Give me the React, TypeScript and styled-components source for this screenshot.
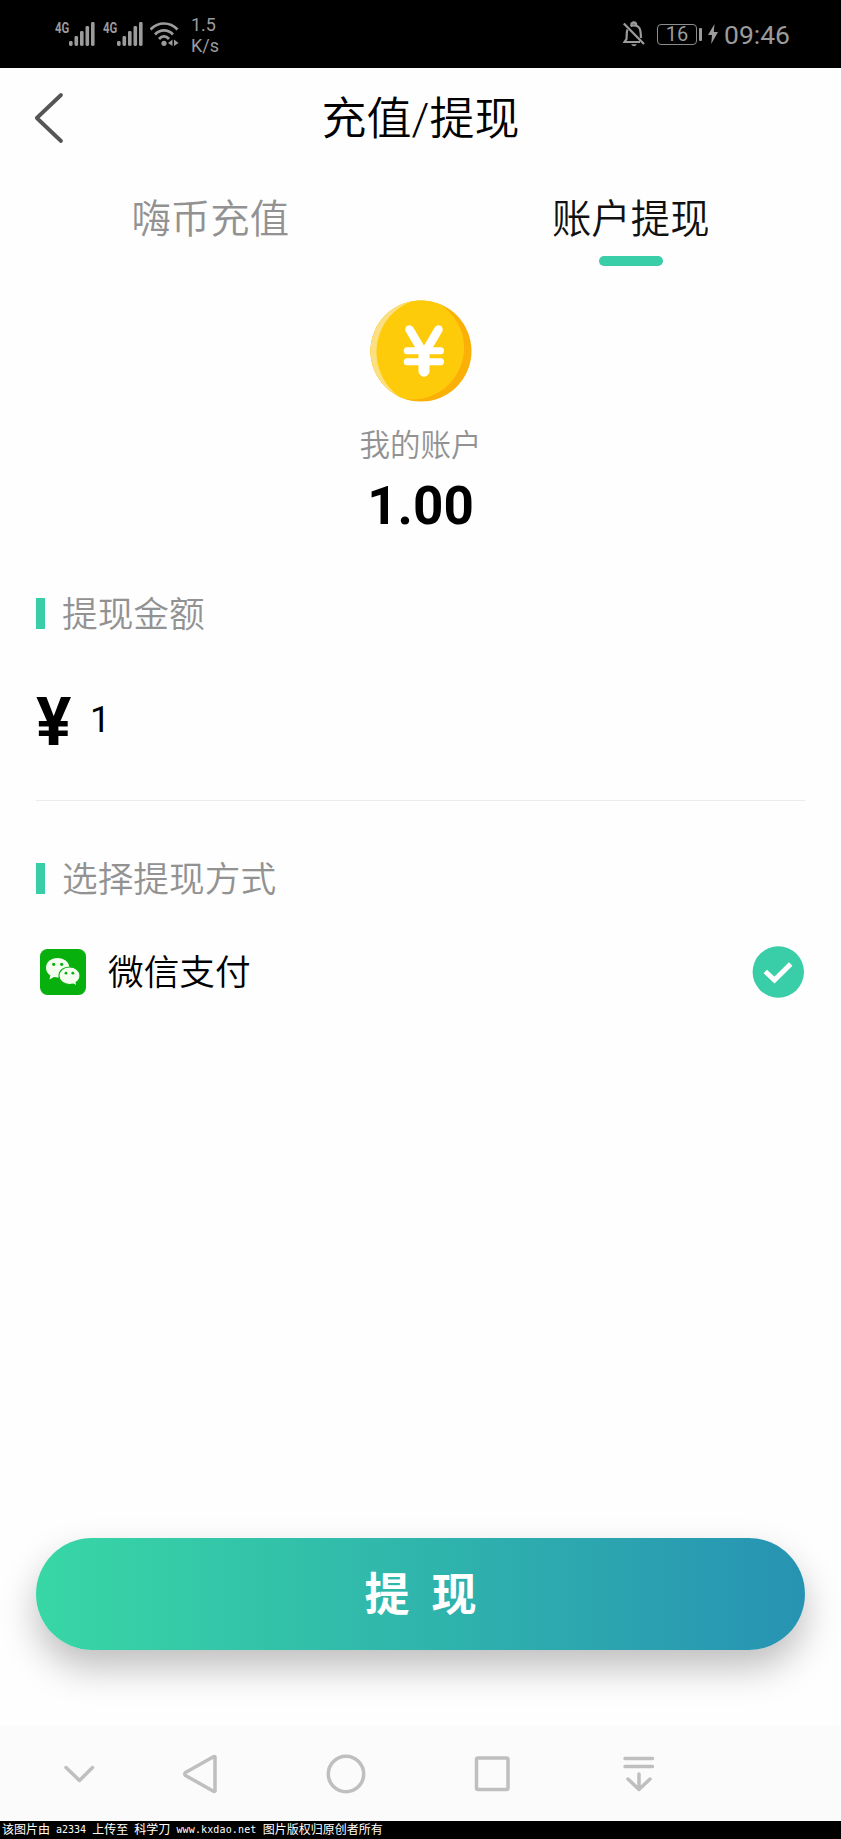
import React from 'react';
import styled, { createGlobalStyle } from 'styled-components';

const cjk = `Roboto, "Noto Sans CJK SC", sans-serif`;

const GlobalStyle = createGlobalStyle`
  * { box-sizing: border-box; }
  html, body { margin: 0; padding: 0; background: #fefefe; }
  body { font-family: ${cjk}; color: #000; }
  svg { display: block; flex: none; }
  button { font: inherit; border: 0; background: none; padding: 0; color: inherit; }
`;

const Screen = styled.div`
  width: 841px;
  height: 1839px;
  display: flex;
  flex-direction: column;
  background: #fefefe;
  overflow: hidden;
`;

const StatusBar = styled.header`
  height: 68px;
  flex: none;
  background: #000;
  color: #9b9b9b;
  display: flex;
  justify-content: space-between;
  padding: 0 51px 0 55px;
`;

const StatusGroup = styled.div`
  display: flex;
  align-items: center;
`;

const Signal = styled.div`
  display: flex;
  align-items: flex-start;
  width: 47.5px;
  height: 24px;
`;

const NetLabel = styled.span`
  width: 14px;
  font-size: 15px;
  line-height: 12px;
  font-weight: 700;
  transform: scaleX(0.76);
  transform-origin: left;
`;

const Speed = styled.div`
  margin: 1px 0 0 12px;
  font-size: 18px;
  line-height: 21px;
`;

const Battery = styled.div`
  width: 40px;
  height: 21px;
  margin: 1px 2px 0 12px;
  border: 1.5px solid #8c8c8c;
  border-radius: 4px;
  font-size: 20px;
  line-height: 19px;
  text-align: center;
`;

const BatteryTip = styled.i`
  width: 3px;
  height: 13px;
  margin: 1px 6px 0 0;
  border-radius: 1px;
  background: #9b9b9b;
`;

const Clock = styled.time`
  margin: 1px 0 0 6px;
  font-size: 26.5px;
  line-height: 30px;
`;

const TitleBar = styled.div`
  height: 100px;
  flex: none;
  display: grid;
  grid-template-columns: 100px 1fr 100px;
  align-items: center;
`;

const BackButton = styled.button`
  padding-left: 34px;
`;

const Title = styled.h1`
  margin: 0;
  padding-top: 4px;
  font-size: 45px;
  line-height: 60px;
  font-weight: 350;
  text-align: center;
`;

const Tabs = styled.nav`
  height: 132px;
  flex: none;
  display: grid;
  grid-template-columns: 1fr 1fr;
  padding-top: 27px;
`;

const Tab = styled.button<{ $active?: boolean }>`
  display: flex;
  flex-direction: column;
  align-items: center;
  font-size: 39.4px;
  line-height: 50px;
  font-weight: 350;
  color: ${p => (p.$active ? '#111' : '#929292')};
  &::after {
    content: '';
    width: 64px;
    height: 10px;
    margin-top: 11px;
    border-radius: 5px;
    background: ${p => (p.$active ? '#39cda8' : 'transparent')};
  }
`;

const Account = styled.section`
  height: 297px;
  flex: none;
  display: flex;
  flex-direction: column;
  align-items: center;
`;

const AccountLabel = styled.div`
  margin-top: 23px;
  font-size: 30.5px;
  line-height: 42px;
  font-weight: 350;
  color: #929292;
`;

const Balance = styled.div`
  margin-top: 9px;
  font-size: 53px;
  line-height: 60px;
  font-weight: 700;
`;

const SectionTitle = styled.h2`
  height: 32px;
  flex: none;
  margin: 0 36px;
  display: flex;
  align-items: center;
  font-size: 35.7px;
  line-height: 32px;
  font-weight: 350;
  color: #929292;
  &::before {
    content: '';
    width: 9px;
    height: 31px;
    margin-right: 17px;
    background: #39cda8;
  }
`;

const SectionText = styled.span`
  padding-top: 3px;
`;

const AmountRow = styled.div`
  height: 172px;
  flex: none;
  margin: 0 36px 61px;
  padding-top: 55px;
  display: flex;
  align-items: flex-start;
  border-bottom: 1px solid #ebebeb;
`;

const Currency = styled.span`
  width: 54px;
  font-size: 66px;
  line-height: 78px;
  font-weight: 700;
`;

const Amount = styled.span`
  font-size: 36px;
  line-height: 72px;
`;

const PayRow = styled.div`
  height: 60px;
  flex: none;
  margin: 48px 37px 0 40px;
  display: flex;
  align-items: center;
`;

const PayName = styled.span`
  flex: 1;
  margin-left: 22px;
  padding-top: 2px;
  font-size: 35.7px;
  line-height: 50px;
  font-weight: 350;
`;

const Submit = styled.button`
  height: 112px;
  flex: none;
  margin: auto 36px 76px;
  padding-top: 2px;
  border-radius: 56px;
  background: linear-gradient(90deg, #38d7a5, #2793b3);
  box-shadow: 0 18px 36px rgba(0, 0, 0, 0.25);
  color: #fff;
  font-size: 45px;
  line-height: 112px;
  font-weight: 700;
  display: flex;
  justify-content: center;
  gap: 22px;
`;

const NavBar = styled.footer`
  height: 95px;
  flex: none;
  display: flex;
  align-items: center;
  gap: 107px;
  padding: 0 0 0 59px;
  background: #fbfbfb;
`;

const Credit = styled.div`
  height: 18px;
  flex: none;
  display: flex;
  align-items: center;
  padding-left: 2px;
  background: #000;
  color: #fff;
  font-size: 12px;
  line-height: 18px;
  white-space: pre;
`;

const Latin = styled.span<{ $spacing?: number }>`
  font-family: "DejaVu Sans Mono", monospace;
  font-size: 10px;
  letter-spacing: ${p => p.$spacing ?? 0}px;
`;

const bars = [5, 10, 15, 20, 24];

const SignalIcon = () => (
  <svg width="26" height="24" viewBox="0 0 26 24" fill="#9b9b9b">
    {bars.map((h, i) => (
      <rect key={h} x={i * 5.5} y={24 - h} width="3.6" height={h} rx="1.4" />
    ))}
  </svg>
);

const MobileSignal = () => (
  <Signal>
    <NetLabel>4G</NetLabel>
    <SignalIcon />
  </Signal>
);

const WifiIcon = () => (
  <svg width="29" height="24" viewBox="0.500 0 29 24" fill="none" stroke="#9b9b9b" strokeWidth="2.7">
    <path d="M1 7.5C8.500-.5 20.500-.5 28 7.500M5.500 12.500C10.500 7 18.500 7 23.500 12.500M9.500 17C12.500 13.500 16.500 13.500 19.500 17" />
    <circle cx="14.500" cy="21.300" r="2.600" fill="#9b9b9b" stroke="none" />
    <path d="M23 17.500V24L18.500 21ZM24.500 17.500V24L29 21Z" fill="#9b9b9b" stroke="none" />
  </svg>
);

const BellOffIcon = () => (
  <svg width="22" height="26" viewBox="0 0 22 26" fill="none" stroke="#9b9b9b" strokeWidth="2.200">
    <path d="M4.500 8.500C3.500 10.500 3.800 15 3.500 18L1.500 21H17M7.500 5C9 4 13.500 4 15.500 6C18.300 8.500 17.500 13 18 17" />
    <path d="M8.500 4V2.500Q11 .5 13 2.500V4" />
    <path d="M.8 2.500L21 23" strokeWidth="2.300" />
    <path d="M8 23.300H14Q11 27 8 23.300Z" fill="#9b9b9b" stroke="none" />
  </svg>
);

const BoltIcon = () => (
  <svg width="10" height="20" viewBox="0 0 10 20" fill="#9b9b9b">
    <path d="M6.500 0L0 11H4L3.200 20L10 8H5.800Z" />
  </svg>
);

const BackIcon = () => (
  <svg width="30" height="52" viewBox="0 0 30 52" fill="none" stroke="#555" strokeWidth="3.800" strokeLinecap="round" strokeLinejoin="round">
    <path d="M27 3L2.800 26L27 49" />
  </svg>
);

const CoinIcon = () => (
  <svg width="102" height="102" viewBox="0 0 102 102">
    <defs>
      <clipPath id="coin">
        <circle cx="51" cy="51" r="50.500" />
      </clipPath>
    </defs>
    <g clipPath="url(#coin)">
      <rect width="102" height="102" fill="#fbb007" />
      <circle cx="42.500" cy="47.800" r="51.500" fill="#fecb0b" />
      <path
        d="M0 0H102V102H0ZM61.200 -2.500A54.700 54.700 0 1 0 61.200 106.900A54.700 54.700 0 1 0 61.200 -2.500Z"
        fill="#fbdf83"
        fillRule="evenodd"
      />
    </g>
    <g fill="none" stroke="#fff" strokeLinecap="round" strokeLinejoin="round">
      <path d="M39.500 29.500L54 54L68.500 29.500" strokeWidth="8.500" />
      <path d="M54 53V71.200" strokeWidth="11" />
      <path d="M37.200 50.700H70.500M37.200 61.700H70.500" strokeWidth="7" />
    </g>
  </svg>
);

const WechatIcon = () => (
  <svg width="46" height="46" viewBox="0 0 46 46">
    <rect width="46" height="46" rx="7.500" fill="#08b00d" />
    <path d="M17.500 9C10.800 9 6 13.300 6 19C6 22.200 7.800 24.700 10.300 26.500L9.500 30.500L14 28C15.200 28.300 17 28.500 18 28.500C24.500 28.500 29.500 24.500 29.500 19C29.500 13.300 24 9 17.500 9Z" fill="#f5fff0" />
    <path d="M29.500 18C23.500 18 19 21.800 19 26.800C19 31.800 23.500 35.500 29.500 35.500C31 35.500 32 35.300 33.300 35L37 37L36 33.500C38.500 31.800 40 29.500 40 26.800C40 21.800 35.500 18 29.500 18Z" fill="#f5fff0" stroke="#08b00d" strokeWidth="1.100" />
    <g fill="#08b00d">
      <circle cx="13.700" cy="15.300" r="1.600" />
      <circle cx="21.700" cy="15.300" r="1.600" />
      <circle cx="26" cy="24.200" r="1.400" />
      <circle cx="32.800" cy="24.200" r="1.400" />
    </g>
  </svg>
);

const CheckIcon = () => (
  <svg width="52" height="52" viewBox="0 0 52 52">
    <circle cx="26.300" cy="26" r="25.700" fill="#39cda8" />
    <path d="M13.300 25.500L22.500 34L38.700 18" fill="none" stroke="#fff" strokeWidth="5" />
  </svg>
);

type NavIconProps = { width: number; shift?: number; children: React.ReactNode };

const NavSvg = styled.svg<{ $shift: number }>`
  margin-left: ${p => p.$shift}px;
  fill: none;
  stroke: #bfbfbf;
  stroke-width: 3.5;
  stroke-linecap: round;
  stroke-linejoin: round;
`;

const NavIcon = ({ width, shift = 0, children }: NavIconProps) => (
  <NavSvg $shift={shift} width={width} height="40" viewBox={`0 0 ${width} 40`}>
    {children}
  </NavSvg>
);

export default function App() {
  return (
    <Screen>
      <GlobalStyle />
      <StatusBar>
        <StatusGroup>
          <MobileSignal />
          <MobileSignal />
          <WifiIcon />
          <Speed>1.5<br />K/s</Speed>
        </StatusGroup>
        <StatusGroup>
          <BellOffIcon />
          <Battery>16</Battery>
          <BatteryTip />
          <BoltIcon />
          <Clock>09:46</Clock>
        </StatusGroup>
      </StatusBar>

      <TitleBar>
        <BackButton aria-label="返回"><BackIcon /></BackButton>
        <Title>充值/提现</Title>
      </TitleBar>

      <Tabs>
        <Tab>嗨币充值</Tab>
        <Tab $active>账户提现</Tab>
      </Tabs>

      <Account>
        <CoinIcon />
        <AccountLabel>我的账户</AccountLabel>
        <Balance>1.00</Balance>
      </Account>

      <SectionTitle><SectionText>提现金额</SectionText></SectionTitle>
      <AmountRow>
        <Currency>¥</Currency>
        <Amount>1</Amount>
      </AmountRow>

      <SectionTitle><SectionText>选择提现方式</SectionText></SectionTitle>
      <PayRow>
        <WechatIcon />
        <PayName>微信支付</PayName>
        <CheckIcon />
      </PayRow>

      <Submit><span>提</span><span>现</span></Submit>

      <NavBar>
        <NavIcon width={40}><path d="M7 13.500L20.500 26.500L33.500 13.500" /></NavIcon>
        <NavIcon width={40} shift={-25}><path d="M34 3V37Q33 38 32 37L4.500 21.500Q3 20 4.500 18.500L32 3Q34 2 34 3Z" /></NavIcon>
        <NavIcon width={40} shift={-2}><circle cx="20" cy="20" r="17.700" /></NavIcon>
        <NavIcon width={40}><rect x="3.500" y="4" width="31.500" height="31.500" rx="1.500" /></NavIcon>
        <NavIcon width={40}><path d="M5 4.500H32.500M5 12.500H32.500M19 20V35.500M8 25L19 35.500L30 25" /></NavIcon>
      </NavBar>

      <Credit>
        <span>该图片由</span><Latin> a2334 </Latin><span>上传至</span><Latin> </Latin><span>科学刀</span><Latin $spacing={0.14}> www.kxdao.net </Latin><span>图片版权归原创者所有</span>
      </Credit>
    </Screen>
  );
}
